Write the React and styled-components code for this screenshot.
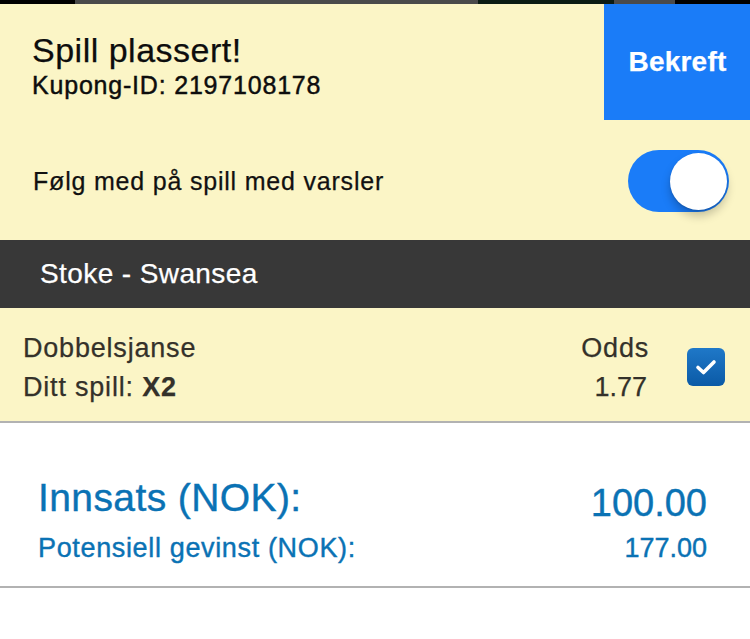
import React from "react";
import styled, { createGlobalStyle } from "styled-components";

const Global = createGlobalStyle`
  html, body { margin: 0; padding: 0; background: #ffffff; }
  body { font-family: "Liberation Sans", Arial, Helvetica, sans-serif; }
  * { box-sizing: border-box; }
`;

const Page = styled.div`
  width: 750px;
  min-height: 639px;
  background: #ffffff;
  display: flex;
  flex-direction: column;
  -webkit-text-stroke: 0.25px currentColor;
`;

const Strip = styled.div`
  display: flex;
  height: 4px;
  background: #000;
`;

const Segment = styled.div`
  width: ${(p) => p.$w}px;
  background: ${(p) => p.$c};
`;

const Yellow = styled.div`
  background: #fbf5c6;
`;

const Header = styled(Yellow)`
  display: flex;
  height: 116px;
`;

const HeaderText = styled.div`
  flex: 1;
  padding: 26px 0 0 32px;
  display: flex;
  flex-direction: column;
  color: #0d0d0d;
`;

const Title = styled.div`
  font-size: 34px;
  line-height: 40px;
  letter-spacing: 0.5px;
`;

const CouponId = styled.div`
  font-size: 25px;
  line-height: 30px;
  letter-spacing: 0.8px;
  -webkit-text-stroke: 0.45px currentColor;
`;

const ConfirmButton = styled.button`
  width: 146px;
  border: none;
  background: #1a7cf8;
  color: #fff;
  font-family: "Liberation Sans", Arial, sans-serif;
  font-weight: 700;
  font-size: 28px;
  letter-spacing: 0.2px;
  padding: 0 0 0 1px;
  cursor: pointer;
`;

const ToggleRow = styled(Yellow)`
  height: 120px;
  display: flex;
  align-items: center;
  justify-content: space-between;
  padding: 2px 21px 0 33px;
`;

const ToggleLabel = styled.div`
  font-size: 25px;
  line-height: 28px;
  letter-spacing: 0.8px;
  color: #111;
`;

const Switch = styled.div`
  position: relative;
  width: 101px;
  height: 62px;
  border-radius: 31px;
  background: #1a7cf8;
`;

const Knob = styled.div`
  position: absolute;
  top: 3px;
  right: 2px;
  width: 57px;
  height: 57px;
  border-radius: 50%;
  background: #fff;
  box-shadow: 0 6px 10px rgba(0, 0, 0, 0.22), 0 1px 2px rgba(0, 0, 0, 0.15);
`;

const MatchBar = styled.div`
  height: 68px;
  background: #383838;
  color: #fff;
  display: flex;
  align-items: center;
  padding: 0 0 0 40px;
  font-size: 28px;
  letter-spacing: 0.4px;
`;

const BetRow = styled(Yellow)`
  display: flex;
  justify-content: space-between;
  align-items: center;
  padding: 21px 25px 14px 23px;
  border-bottom: 2px solid #b2b2b2;
  color: #34312a;
`;

const Column = styled.div`
  display: flex;
  flex-direction: column;
  align-items: ${(p) => (p.$right ? "flex-end" : "flex-start")};
`;

const BetLine = styled.div`
  font-size: 27px;
  line-height: 39px;
  letter-spacing: ${(p) => (p.$tight ? "0px" : "0.8px")};
  padding-right: ${(p) => (p.$tight ? "2px" : "0")};
`;

const Strong = styled.b`
  font-weight: 700;
`;

const RightGroup = styled.div`
  display: flex;
  align-items: center;
  gap: 38px;
`;

const Check = styled.div`
  width: 38px;
  height: 38px;
  border-radius: 6px;
  background: linear-gradient(#1f78c8, #0b5aa6);
  display: flex;
  align-items: center;
  justify-content: center;
  margin-top: -2px;
`;

const Summary = styled.div`
  padding: 52px 43px 23px 38px;
  border-bottom: 2px solid #b2b2b2;
  color: #0a72b4;
  display: flex;
  flex-direction: column;
  gap: 12px;
  -webkit-text-stroke: 0.4px currentColor;
`;

const SumRow = styled.div`
  display: flex;
  justify-content: space-between;
  align-items: flex-start;
`;

const BigText = styled.div`
  font-size: ${(p) => p.$size || 38}px;
  line-height: ${(p) => (p.$drop ? "36px" : "46px")};
  padding-top: ${(p) => (p.$drop ? "10px" : "0")};
  letter-spacing: ${(p) => p.$ls || "0px"};
`;

const SmallText = styled.div`
  font-size: 27px;
  line-height: 30px;
  letter-spacing: ${(p) => p.$ls || "0px"};
`;

export default function App() {
  return (
    <>
      <Global />
      <Page>
        <Strip>
          <Segment $w={75} $c="#000" />
          <Segment $w={403} $c="#4a4a4a" />
          <Segment $w={136} $c="#0b1b13" />
          <Segment $w={61} $c="#4a4a4a" />
          <Segment $w={75} $c="#000" />
        </Strip>
        <Header>
          <HeaderText>
            <Title>Spill plassert!</Title>
            <CouponId>Kupong-ID: 2197108178</CouponId>
          </HeaderText>
          <ConfirmButton>Bekreft</ConfirmButton>
        </Header>
        <ToggleRow>
          <ToggleLabel>Følg med på spill med varsler</ToggleLabel>
          <Switch>
            <Knob />
          </Switch>
        </ToggleRow>
        <MatchBar>Stoke - Swansea</MatchBar>
        <BetRow>
          <Column>
            <BetLine>Dobbelsjanse</BetLine>
            <BetLine>
              Ditt spill: <Strong>X2</Strong>
            </BetLine>
          </Column>
          <RightGroup>
            <Column $right>
              <BetLine>Odds</BetLine>
              <BetLine $tight>1.77</BetLine>
            </Column>
            <Check>
              <svg width="22" height="18" viewBox="0 0 22 18">
                <polyline
                  points="3,9.5 8.5,14.5 19,4"
                  fill="none"
                  stroke="#fff"
                  strokeWidth="3.6"
                  strokeLinecap="round"
                  strokeLinejoin="round"
                />
              </svg>
            </Check>
          </RightGroup>
        </BetRow>
        <Summary>
          <SumRow>
            <BigText $size={39} $ls="0.4px">Innsats (NOK):</BigText>
            <BigText $drop>100.00</BigText>
          </SumRow>
          <SumRow>
            <SmallText $ls="0.65px">Potensiell gevinst (NOK):</SmallText>
            <SmallText>177.00</SmallText>
          </SumRow>
        </Summary>
      </Page>
    </>
  );
}
